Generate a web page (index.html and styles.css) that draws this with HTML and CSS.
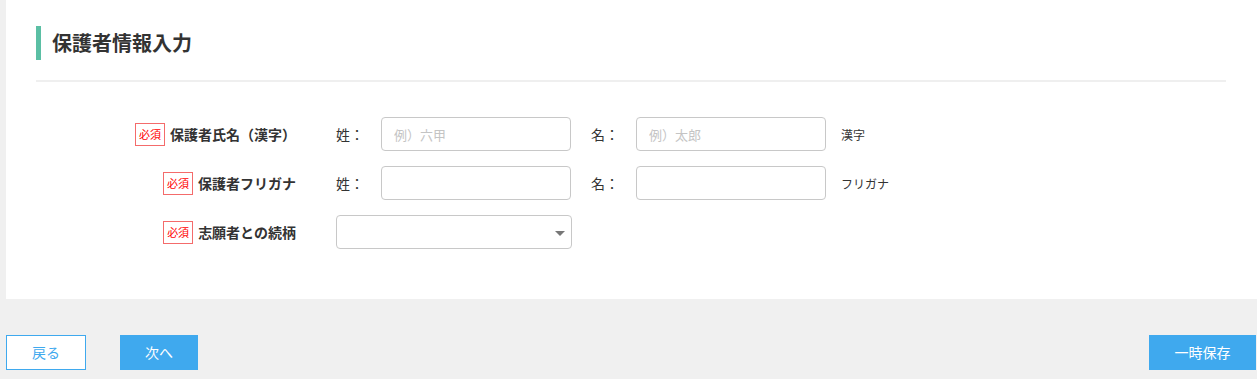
FILE: index.html
```html
<!DOCTYPE html>
<html lang="ja">
  <head>
    <meta charset="utf-8">
    <title>保護者情報入力</title>
    <link rel="stylesheet" href="styles.css">
  </head>
  <body>
    <section class="card">
      <h2 class="card-title">保護者情報入力</h2>
      <div class="form">
        <div class="row">
          <div class="label"><span class="required">必須</span>保護者氏名（漢字）</div>
          <div class="fields">
            <span class="sub">姓：</span>
            <input class="text" type="text" placeholder="例）六甲">
            <span class="sub">名：</span>
            <input class="text" type="text" placeholder="例）太郎">
            <span class="note">漢字</span>
          </div>
        </div>
        <div class="row">
          <div class="label"><span class="required">必須</span>保護者フリガナ</div>
          <div class="fields">
            <span class="sub">姓：</span>
            <input class="text" type="text">
            <span class="sub">名：</span>
            <input class="text" type="text">
            <span class="note">フリガナ</span>
          </div>
        </div>
        <div class="row">
          <div class="label"><span class="required">必須</span>志願者との続柄</div>
          <div class="fields">
            <div class="select">
              <span class="arrow"></span>
            </div>
          </div>
        </div>
      </div>
    </section>
    <div class="actions">
      <div class="left">
        <a href="#" class="btn btn-outline">戻る</a>
        <a href="#" class="btn btn-next">次へ</a>
      </div>
      <a href="#" class="btn btn-save">一時保存</a>
    </div>
  </body>
</html>
```

FILE: styles.css
```css
body, html {
    margin: 0;
    padding: 0;
    background: #f0f0f0;
    font-family: "Noto Sans CJK JP", "Noto Sans", sans-serif;
    font-size: 13px;
    color: #333;
}

.card {
    margin-left: 6px;
    background: #fff;
    padding: 26px 31px 50px 30px;
}

.card-title {
    margin: 0;
    height: 34px;
    line-height: 34px;
    border-left: 5px solid #5bbfa4;
    padding-left: 11px;
    font-size: 20px;
    font-weight: 700;
    color: #333;
}

.form {
    margin-top: 20px;
    border-top: 2px solid #efefef;
    padding-top: 35px;
    display: flex;
    flex-direction: column;
    gap: 15px;
}

.row {
    display: flex;
    align-items: center;
    height: 34px;
}

.label {
    width: 260px;
    display: flex;
    justify-content: flex-end;
    align-items: center;
    font-size: 14px;
    font-weight: 700;
    margin-right: 40px;
}

.required {
    display: inline-block;
    width: 28px;
    height: 21px;
    line-height: 21px;
    border: 1px solid #f46b6b;
    color: #f00;
    font-size: 11px;
    font-weight: 400;
    text-align: center;
    margin-right: 5px;
}

.fields {
    display: flex;
    align-items: center;
}

.sub {
    width: 45px;
    font-size: 14px;
}

.text {
    box-sizing: border-box;
    width: 190px;
    height: 34px;
    border: 1px solid #c8c8c8;
    border-radius: 4px;
    padding: 0 12px;
    font-family: inherit;
    font-size: 13px;
    color: #333;
    margin-right: 20px;
}

.text::placeholder {
    color: #c4c4c4;
}

.note {
    margin-left: -5px;
    font-size: 12px;
}

.select {
    box-sizing: border-box;
    width: 236px;
    height: 34px;
    border: 1px solid #c8c8c8;
    border-radius: 4px;
    display: flex;
    justify-content: flex-end;
    align-items: center;
    padding-right: 6px;
}

.arrow {
    width: 0;
    height: 0;
    border-left: 5px solid transparent;
    border-right: 5px solid transparent;
    border-top: 5px solid #777;
    margin-top: 2px;
}

.actions {
    display: flex;
    justify-content: space-between;
    margin: 36px 1px 0 6px;
}

.left {
    display: flex;
    gap: 34px;
}

.btn {
    box-sizing: border-box;
    display: inline-block;
    height: 35px;
    line-height: 33px;
    text-align: center;
    text-decoration: none;
    font-size: 14px;
    border: 1px solid #3fa9ee;
}

.btn-outline {
    width: 80px;
    background: #fff;
    color: #3fa9ee;
}

.btn-next {
    width: 78px;
    background: #3fa9ee;
    color: #fff;
}

.btn-save {
    width: 107px;
    background: #3fa9ee;
    color: #fff;
}
```
